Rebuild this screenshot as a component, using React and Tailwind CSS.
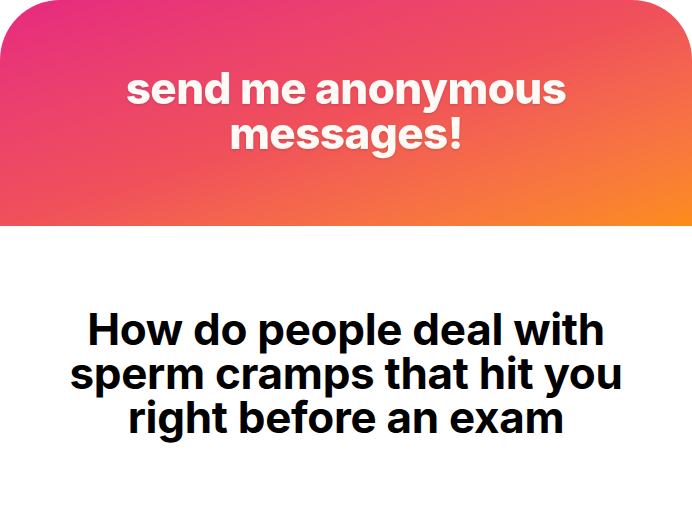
export default function App() {
  return (
    <div className="w-[692px] h-[526px] bg-white flex flex-col" style={{ fontFamily: 'Inter, "Noto Sans", sans-serif' }}>
      <header className="h-[226px] rounded-t-[60px] bg-gradient-to-br from-[#e6287f] via-[#f0505a] to-[#fc8c18] flex items-center justify-center pb-[4px]">
        <h1 className="text-[#fffaf5] text-[44px] font-extrabold leading-[45px] tracking-[-0.6px] text-center w-[520px] drop-shadow-[0_1px_1px_rgba(0,0,0,0.15)]">
          send me anonymous messages!
        </h1>
      </header>
      <main className="flex-1 flex items-center justify-center pb-[6px]">
        <p className="text-black text-[44px] font-bold leading-[44px] text-center w-[620px] tracking-[-0.3px]">
          How do people deal with sperm cramps that hit you right before an exam
        </p>
      </main>
    </div>
  );
}
